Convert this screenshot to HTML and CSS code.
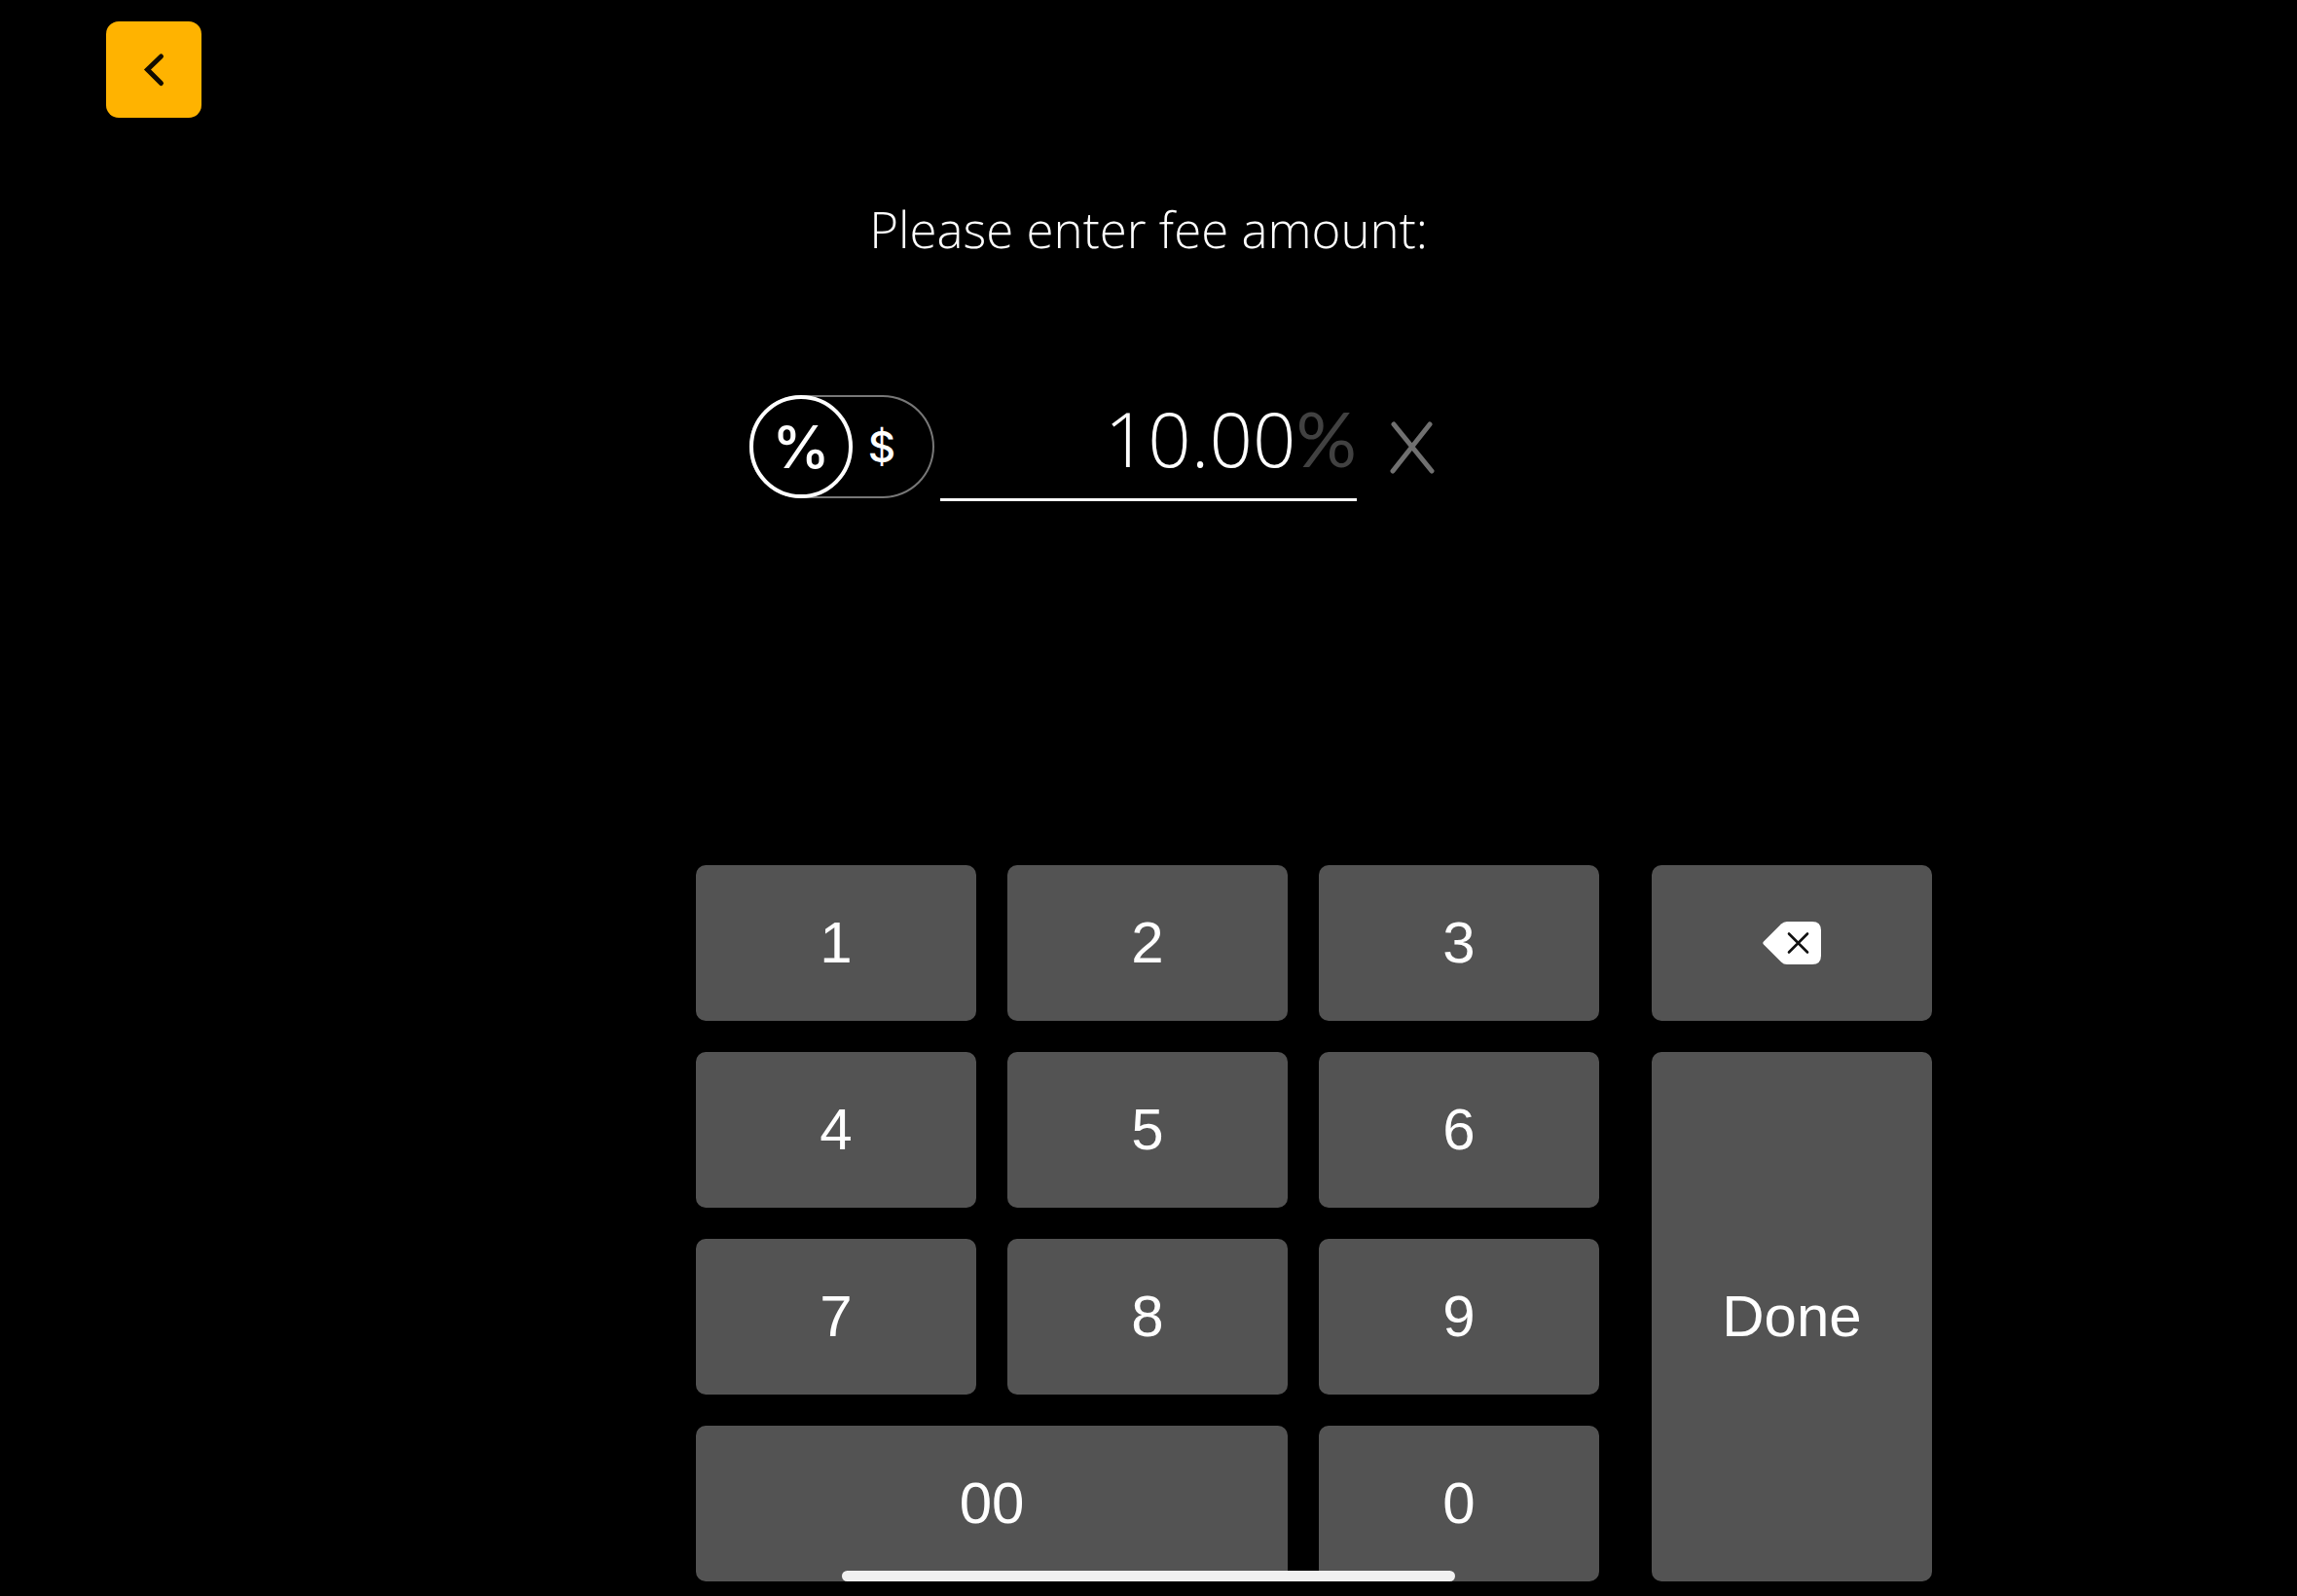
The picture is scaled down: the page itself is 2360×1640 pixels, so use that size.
FILE: index.html
```html
<!DOCTYPE html>
<html lang="en">
<head>
<meta charset="utf-8">
<meta name="viewport" content="width=device-width, initial-scale=1">
<title>Fee amount</title>
<link rel="stylesheet" href="styles.css">
</head>
<body>
<main class="screen">
  <header class="topbar">
    <button class="back" type="button" aria-label="Back">
      <svg class="back-icon" viewBox="0 0 24 36" aria-hidden="true"><path d="M19.500 4 5.500 17.500 19.500 31.500"/></svg>
    </button>
  </header>

  <section class="fee">
    <h1 class="title"><label for="amount">Please enter fee amount:</label></h1>
    <div class="fee-row">
      <div class="toggle" role="radiogroup" aria-label="Fee type">
        <label class="option"><input type="radio" name="unit" value="percent" aria-label="Percent" checked><span class="percent">%</span></label>
        <label class="option option-dollar"><input type="radio" name="unit" value="dollar" aria-label="Dollar"><span>$</span></label>
      </div>
      <div class="field">
        <input class="amount" id="amount" type="text" inputmode="decimal" value="10.00">
        <span class="suffix">%</span>
      </div>
      <button class="clear" type="button" aria-label="Clear">
        <svg class="clear-icon" viewBox="0 0 48 56" aria-hidden="true"><path d="M4 3 43 51M41 3 3 51"/></svg>
      </button>
    </div>
  </section>

  <section class="keypad" aria-label="Keypad">
    <div class="digits">
      <button class="key" type="button">1</button>
      <button class="key" type="button">2</button>
      <button class="key" type="button">3</button>
      <button class="key" type="button">4</button>
      <button class="key" type="button">5</button>
      <button class="key" type="button">6</button>
      <button class="key" type="button">7</button>
      <button class="key" type="button">8</button>
      <button class="key" type="button">9</button>
      <button class="key key-wide" type="button">00</button>
      <button class="key" type="button">0</button>
    </div>
    <div class="actions">
      <button class="key" type="button" aria-label="Delete">
        <svg class="delete-icon" viewBox="0 0 60 44" aria-hidden="true">
          <path fill="#fff" d="M1 20.500 19 2.500Q21.500 0 25 0H51Q60 0 60 9V35Q60 44 51 44H25Q21.500 44 19 41.500L1 23.500Q-.5 22 1 20.500Z"/>
          <path fill="none" stroke="#111" stroke-width="2.600" stroke-linecap="round" d="M27 12.500 46 31.500M46 12.500 27 31.500"/>
        </svg>
      </button>
      <button class="key" type="button">Done</button>
    </div>
  </section>
  <div class="home-indicator"></div>
</main>
</body>
</html>
```

FILE: styles.css
```css
* {
  box-sizing: border-box;
}

body {
  margin: 0;
  background: #000;
  color: #fff;
  font-family: "Open Sans", sans-serif;
}

button {
  padding: 0;
  border: 0;
  color: inherit;
  font: inherit;
  cursor: pointer;
}

.screen {
  position: relative;
  display: flex;
  flex-direction: column;
  min-height: 100vh;
  padding-bottom: 15px;
}

.topbar {
  padding: 22px 109px 0;
}

.back {
  display: grid;
  place-items: center;
  width: 98px;
  height: 99px;
  border-radius: 13px;
  background: #ffb300;
}

.back-icon {
  width: 24px;
  height: 36px;
  fill: none;
  stroke: #120c00;
  stroke-width: 5;
  stroke-linecap: round;
}

.title {
  margin: 84px 0 0;
  font-size: 51px;
  line-height: 60px;
  font-weight: 350;
  text-align: center;
}

.fee-row {
  display: grid;
  grid-template-columns: 1fr 428px 1fr;
  margin-top: 141px;
}

.toggle {
  display: flex;
  justify-self: end;
  width: 190px;
  height: 106px;
  margin-right: 6px;
  border-radius: 53px;
  box-shadow: inset 0 0 0 2px #777;
}

.option {
  display: grid;
  place-items: center;
  width: 106px;
  height: 106px;
  border-radius: 50%;
  font-family: Inter, sans-serif;
  font-size: 44px;
  line-height: 60px;
  font-weight: 500;
  cursor: pointer;
}

.option:has(:checked) {
  border: 4px solid #fff;
}

.option-dollar {
  width: 60px;
}

.option input {
  position: absolute;
  opacity: 0;
}

.percent {
  font-size: 60px;
}

.field {
  display: flex;
  align-items: baseline;
  height: 109px;
  border-bottom: 3px solid #fff;
  font-size: 78px;
  line-height: 88px;
  font-weight: 350;
}

.amount {
  flex: 1;
  min-width: 0;
  height: 88px;
  padding: 0;
  border: 0;
  outline: 0;
  background: none;
  color: #fff;
  font: inherit;
  text-align: right;
}

.suffix {
  color: #414141;
  font-family: Lato, sans-serif;
  font-weight: 400;
}

.clear {
  justify-self: start;
  align-self: center;
  margin-left: 34px;
  background: none;
}

.clear-icon {
  display: block;
  width: 48px;
  height: 56px;
  fill: none;
  stroke: #707070;
  stroke-width: 5;
  stroke-linecap: round;
}

.keypad {
  display: grid;
  grid-template-columns: 1fr auto 1fr;
  margin-top: auto;
  padding-right: 2px;
}

.digits {
  display: grid;
  grid-column: 2;
  grid-template-columns: repeat(3, 288px);
  grid-auto-rows: 160px;
  gap: 32px;
}

.actions {
  display: grid;
  grid-template-columns: 288px;
  grid-template-rows: 160px 1fr;
  gap: 32px;
  padding-left: 54px;
}

.key {
  display: grid;
  place-items: center;
  border-radius: 10px;
  background: #535353;
  font-family: "Liberation Sans", Arial, sans-serif;
  font-size: 60px;
  line-height: 68px;
}

.key-wide {
  grid-column: span 2;
}

.delete-icon {
  width: 60px;
  height: 44px;
}

.home-indicator {
  position: absolute;
  bottom: 15px;
  left: 50%;
  width: 630px;
  height: 11px;
  border-radius: 6px;
  background: #f0f0f0;
  transform: translateX(-50%);
}
```
